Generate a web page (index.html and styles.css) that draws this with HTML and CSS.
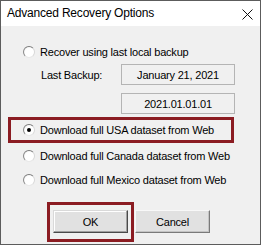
FILE: index.html
```html
<!DOCTYPE html>
<html>
<head>
<meta charset="utf-8">
<link rel="stylesheet" href="styles.css">
</head>
<body>
<div class="window">
  <div class="titlebar">
    <span class="title">Advanced Recovery Options</span>
    <svg class="close" width="11" height="11" viewBox="0 0 11 11"><path d="M0.5 0.5 L10.5 10.5 M10.5 0.5 L0.5 10.5" stroke="#111" stroke-width="1" fill="none"/></svg>
  </div>
  <div class="content">
    <div class="radio-row first"><span class="radio"></span><span class="label">Recover using last local backup</span></div>
    <div class="field-row"><span class="field-label">Last Backup:</span><div class="field">January 21, 2021</div></div>
    <div class="field-row second"><div class="field">2021.01.01.01</div></div>
    <div class="highlight"><div class="radio-row"><span class="radio checked"></span><span class="label">Download full USA dataset from Web</span></div></div>
    <div class="radio-row canada"><span class="radio"></span><span class="label">Download full Canada dataset from Web</span></div>
    <div class="radio-row mexico"><span class="radio"></span><span class="label">Download full Mexico dataset from Web</span></div>
    <div class="buttons">
      <div class="btn-highlight"><div class="btn default">OK</div></div>
      <div class="btn cancel">Cancel</div>
    </div>
  </div>
</div>
</body>
</html>
```
FILE: styles.css
```css
html, body { margin: 0; padding: 0; background: #ffffff; }
body { width: 263px; height: 246px; overflow: hidden; font-family: "Liberation Sans", Arial, sans-serif; color: #000; }
.window { box-sizing: border-box; width: 261px; height: 245px; border: 1px solid #5c5c5c; background: #f0f0f0; display: flex; flex-direction: column; }
.titlebar { height: 25px; background: #fff; display: flex; align-items: center; justify-content: space-between; padding: 0 7px 0 6px; }
.title { font-size: 12px; letter-spacing: -0.2px; line-height: 25px; }
.close { margin-top: 1px; }
.content { display: flex; flex-direction: column; font-size: 11px; letter-spacing: -0.2px; }
.radio-row { display: flex; align-items: center; height: 14px; padding-left: 22px; }
.radio { box-sizing: border-box; width: 12px; height: 12px; border-radius: 50%; border: 1px solid; border-color: #7a7a7a #d8d8d8 #e8e8e8 #8a8a8a; background: radial-gradient(circle at 60% 60%, #ffffff 55%, #e6e6e6 100%); margin-right: 5px; display: flex; align-items: center; justify-content: center; }
.radio.checked::after { content: ""; width: 4px; height: 4px; border-radius: 50%; background: #000; }
.radio-row.first { margin-top: 19px; }
.field-row { display: flex; align-items: center; height: 21px; margin-top: 5px; }
.field-row.second { margin-top: 8px; padding-left: 120px; }
.field-label { width: 80px; padding-left: 40px; }
.field { box-sizing: border-box; width: 114px; height: 21px; border: 1px solid #b4b4b4; background: #f0f0f0; display: flex; align-items: center; justify-content: center; }
.highlight { box-sizing: border-box; margin: 3px 0 0 7px; width: 226px; height: 26px; border: 3px solid #8b1c22; display: flex; align-items: center; }
.highlight .radio-row { padding-left: 12px; }
.radio-row.canada { margin-top: 6px; }
.radio-row.mexico { margin-top: 10px; }
.buttons { display: flex; align-items: flex-start; margin: 15px 0 0 46px; }
.btn-highlight { border: 3px solid #8b1c22; padding: 5px 3px 6px 3px; }
.btn { box-sizing: border-box; width: 75px; height: 23px; background: #e1e1e1; border: 1px solid #adadad; display: flex; align-items: center; justify-content: center; font-size: 11px; }
.btn.default { border-color: #d9d9d9 #4a4a4a #4a4a4a #d9d9d9; box-shadow: inset -1px -1px 0 #a0a0a0, inset 1px 1px 0 #fff; }
.btn.cancel { margin: 8px 0 0 1px; border-color: #f8f8f8 #7a7a7a #7a7a7a #f8f8f8; box-shadow: inset -1px -1px 0 #c4c4c4; }
```
